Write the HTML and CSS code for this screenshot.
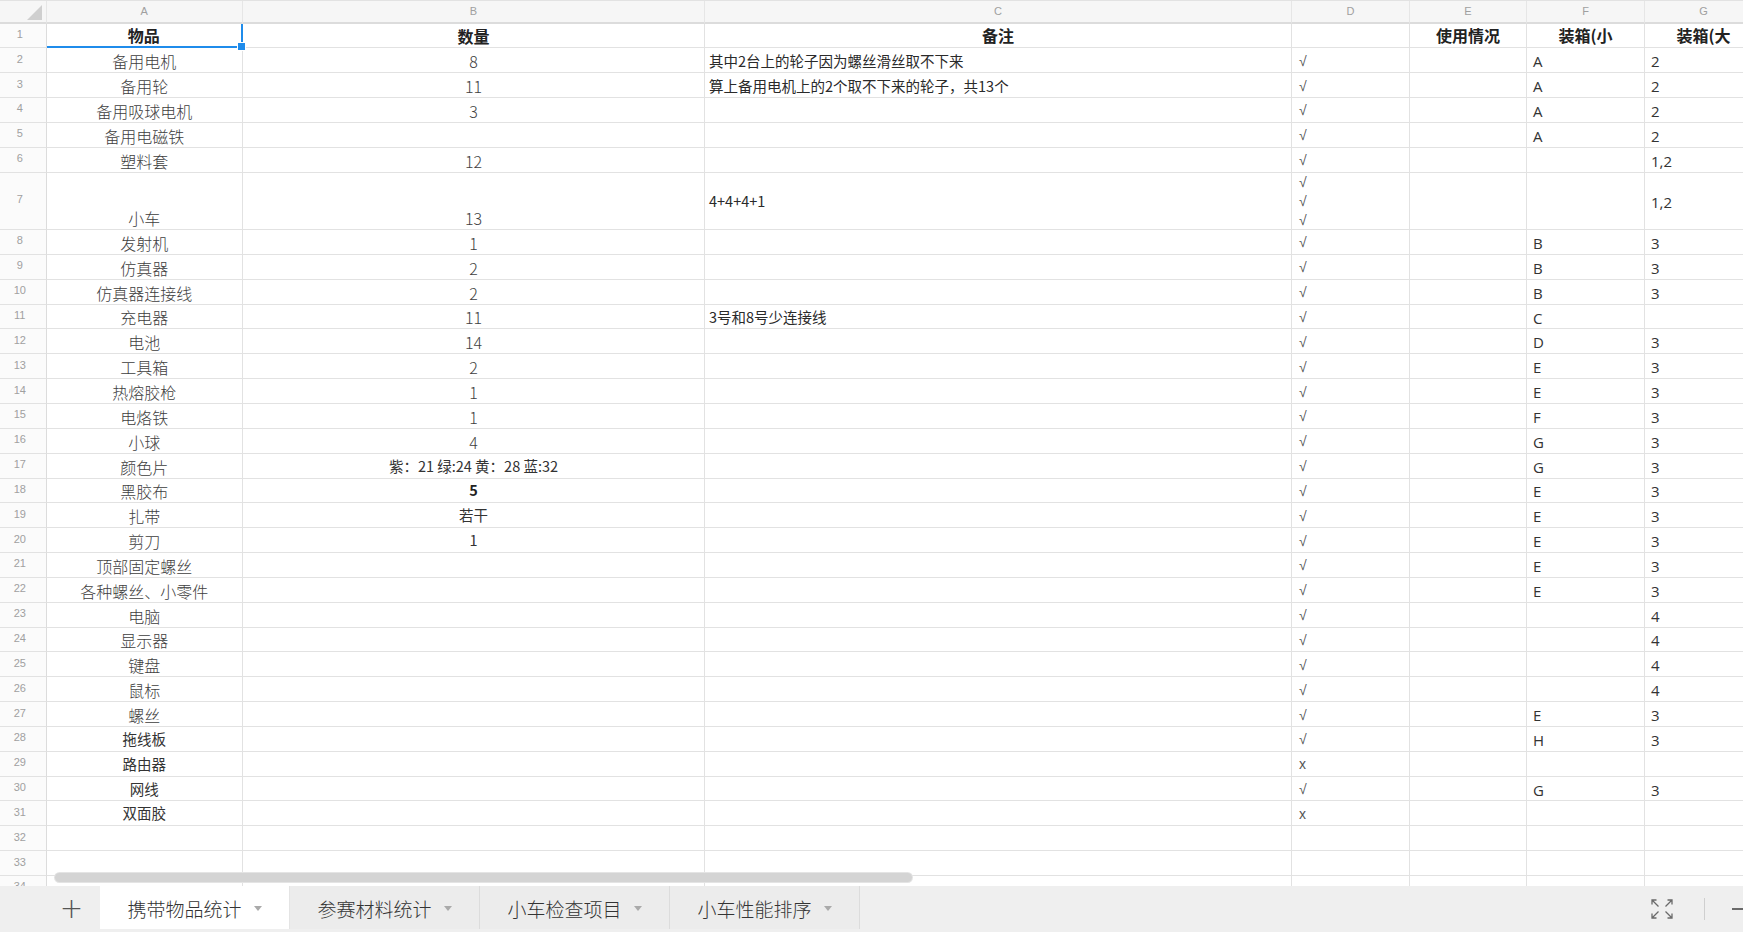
FILE: index.html
```html
<!DOCTYPE html>
<html lang="zh-CN">
<head>
<meta charset="utf-8">
<title>携带物品统计</title>
<link rel="stylesheet" href="styles.css">
</head>
<body>
<div class="app">
  <div class="sheet">
    <div class="row hdr">
      <div class="corner"><svg width="15" height="15" viewBox="0 0 15 15"><polygon points="15,0 15,15 0,15" fill="#cfcfcf"/></svg></div>
      <div>A</div><div>B</div><div>C</div><div>D</div><div>E</div><div>F</div><div>G</div>
    </div>
    <div class="row"><div class="rh">1</div><div class="a hb sel">物品</div><div class="b hb">数量</div><div class="cc hb ctr">备注</div><div class="d"></div><div class="e hb ctr">使用情况</div><div class="f hb ctr">装箱(小</div><div class="g hb ctr">装箱(大</div></div>
    <div class="row"><div class="rh">2</div><div class="a">备用电机</div><div class="b">8</div><div class="cc">其中2台上的轮子因为螺丝滑丝取不下来</div><div class="d">√</div><div class="e"></div><div class="f">A</div><div class="g">2</div></div>
    <div class="row"><div class="rh">3</div><div class="a">备用轮</div><div class="b">11</div><div class="cc">算上备用电机上的2个取不下来的轮子，共13个</div><div class="d">√</div><div class="e"></div><div class="f">A</div><div class="g">2</div></div>
    <div class="row"><div class="rh">4</div><div class="a">备用吸球电机</div><div class="b">3</div><div class="cc"></div><div class="d">√</div><div class="e"></div><div class="f">A</div><div class="g">2</div></div>
    <div class="row"><div class="rh">5</div><div class="a">备用电磁铁</div><div class="b"></div><div class="cc"></div><div class="d">√</div><div class="e"></div><div class="f">A</div><div class="g">2</div></div>
    <div class="row"><div class="rh">6</div><div class="a">塑料套</div><div class="b">12</div><div class="cc"></div><div class="d">√</div><div class="e"></div><div class="f"></div><div class="g">1,2</div></div>
    <div class="row tall"><div class="rh">7</div><div class="a">小车</div><div class="b">13</div><div class="cc">4+4+4+1</div><div class="d stack"><span>√</span><span>√</span><span>√</span></div><div class="e"></div><div class="f"></div><div class="g">1,2</div></div>
    <div class="row"><div class="rh">8</div><div class="a">发射机</div><div class="b">1</div><div class="cc"></div><div class="d">√</div><div class="e"></div><div class="f">B</div><div class="g">3</div></div>
    <div class="row"><div class="rh">9</div><div class="a">仿真器</div><div class="b">2</div><div class="cc"></div><div class="d">√</div><div class="e"></div><div class="f">B</div><div class="g">3</div></div>
    <div class="row"><div class="rh">10</div><div class="a">仿真器连接线</div><div class="b">2</div><div class="cc"></div><div class="d">√</div><div class="e"></div><div class="f">B</div><div class="g">3</div></div>
    <div class="row"><div class="rh">11</div><div class="a">充电器</div><div class="b">11</div><div class="cc">3号和8号少连接线</div><div class="d">√</div><div class="e"></div><div class="f">C</div><div class="g"></div></div>
    <div class="row"><div class="rh">12</div><div class="a">电池</div><div class="b">14</div><div class="cc"></div><div class="d">√</div><div class="e"></div><div class="f">D</div><div class="g">3</div></div>
    <div class="row"><div class="rh">13</div><div class="a">工具箱</div><div class="b">2</div><div class="cc"></div><div class="d">√</div><div class="e"></div><div class="f">E</div><div class="g">3</div></div>
    <div class="row"><div class="rh">14</div><div class="a">热熔胶枪</div><div class="b">1</div><div class="cc"></div><div class="d">√</div><div class="e"></div><div class="f">E</div><div class="g">3</div></div>
    <div class="row"><div class="rh">15</div><div class="a">电烙铁</div><div class="b">1</div><div class="cc"></div><div class="d">√</div><div class="e"></div><div class="f">F</div><div class="g">3</div></div>
    <div class="row"><div class="rh">16</div><div class="a">小球</div><div class="b">4</div><div class="cc"></div><div class="d">√</div><div class="e"></div><div class="f">G</div><div class="g">3</div></div>
    <div class="row"><div class="rh">17</div><div class="a">颜色片</div><div class="b s">紫：21 绿:24 黄：28 蓝:32</div><div class="cc"></div><div class="d">√</div><div class="e"></div><div class="f">G</div><div class="g">3</div></div>
    <div class="row"><div class="rh">18</div><div class="a">黑胶布</div><div class="b s bold">5</div><div class="cc"></div><div class="d">√</div><div class="e"></div><div class="f">E</div><div class="g">3</div></div>
    <div class="row"><div class="rh">19</div><div class="a">扎带</div><div class="b s">若干</div><div class="cc"></div><div class="d">√</div><div class="e"></div><div class="f">E</div><div class="g">3</div></div>
    <div class="row"><div class="rh">20</div><div class="a">剪刀</div><div class="b s">1</div><div class="cc"></div><div class="d">√</div><div class="e"></div><div class="f">E</div><div class="g">3</div></div>
    <div class="row"><div class="rh">21</div><div class="a">顶部固定螺丝</div><div class="b"></div><div class="cc"></div><div class="d">√</div><div class="e"></div><div class="f">E</div><div class="g">3</div></div>
    <div class="row"><div class="rh">22</div><div class="a">各种螺丝、小零件</div><div class="b"></div><div class="cc"></div><div class="d">√</div><div class="e"></div><div class="f">E</div><div class="g">3</div></div>
    <div class="row"><div class="rh">23</div><div class="a">电脑</div><div class="b"></div><div class="cc"></div><div class="d">√</div><div class="e"></div><div class="f"></div><div class="g">4</div></div>
    <div class="row"><div class="rh">24</div><div class="a">显示器</div><div class="b"></div><div class="cc"></div><div class="d">√</div><div class="e"></div><div class="f"></div><div class="g">4</div></div>
    <div class="row"><div class="rh">25</div><div class="a">键盘</div><div class="b"></div><div class="cc"></div><div class="d">√</div><div class="e"></div><div class="f"></div><div class="g">4</div></div>
    <div class="row"><div class="rh">26</div><div class="a">鼠标</div><div class="b"></div><div class="cc"></div><div class="d">√</div><div class="e"></div><div class="f"></div><div class="g">4</div></div>
    <div class="row"><div class="rh">27</div><div class="a">螺丝</div><div class="b"></div><div class="cc"></div><div class="d">√</div><div class="e"></div><div class="f">E</div><div class="g">3</div></div>
    <div class="row"><div class="rh">28</div><div class="a s">拖线板</div><div class="b"></div><div class="cc"></div><div class="d">√</div><div class="e"></div><div class="f">H</div><div class="g">3</div></div>
    <div class="row"><div class="rh">29</div><div class="a s">路由器</div><div class="b"></div><div class="cc"></div><div class="d">x</div><div class="e"></div><div class="f"></div><div class="g"></div></div>
    <div class="row"><div class="rh">30</div><div class="a s">网线</div><div class="b"></div><div class="cc"></div><div class="d">√</div><div class="e"></div><div class="f">G</div><div class="g">3</div></div>
    <div class="row"><div class="rh">31</div><div class="a s">双面胶</div><div class="b"></div><div class="cc"></div><div class="d">x</div><div class="e"></div><div class="f"></div><div class="g"></div></div>
    <div class="row"><div class="rh">32</div><div class="a"></div><div class="b"></div><div class="cc"></div><div class="d"></div><div class="e"></div><div class="f"></div><div class="g"></div></div>
    <div class="row"><div class="rh">33</div><div class="a"></div><div class="b"></div><div class="cc"></div><div class="d"></div><div class="e"></div><div class="f"></div><div class="g"></div></div>
    <div class="row"><div class="rh">34</div><div class="a"></div><div class="b"></div><div class="cc"></div><div class="d"></div><div class="e"></div><div class="f"></div><div class="g"></div></div>
    <div class="hscroll"></div>
  </div>
  <div class="tabbar">
    <div class="add">+</div>
    <div class="tab active"><span>携带物品统计</span><i class="arrow"></i></div>
    <div class="tab"><span>参赛材料统计</span><i class="arrow"></i></div>
    <div class="tab"><span>小车检查项目</span><i class="arrow"></i></div>
    <div class="tab"><span>小车性能排序</span><i class="arrow"></i></div>
    <div class="tools">
      <svg class="full" width="24" height="22" viewBox="0 0 24 22" fill="none" stroke="#6a6a6a" stroke-width="1.3">
        <path d="M8.5 8.5L2 2M2 6.5V2H6.5"/>
        <path d="M15.5 8.5L22 2M17.5 2H22V6.5"/>
        <path d="M8.5 13.5L2 20M2 15.5V20H6.5"/>
        <path d="M15.5 13.5L22 20M22 15.5V20H17.5"/>
      </svg>
      <div class="sep"></div>
      <div class="minus"></div>
    </div>
  </div>
</div>
</body>
</html>
```
FILE: styles.css
```css
* { box-sizing: border-box; }
html, body { margin: 0; padding: 0; }
body {
  width: 1743px;
  height: 932px;
  overflow: hidden;
  background: #fff;
  font-family: "Noto Sans CJK SC", "Noto Sans", sans-serif;
  color: #333;
}
.app { display: flex; flex-direction: column; height: 932px; }
.sheet { position: relative; height: 886px; flex: none; overflow: hidden; }
.row {
  display: grid;
  grid-template-columns: 46.5px 196.5px 462px 587px 118px 117px 118px 118px;
  height: 24.85px;
}
.row.tall { height: 57.5px; }
.row > div {
  border-right: 1px solid #e2e2e2;
  border-bottom: 1px solid #e2e2e2;
  display: flex;
  align-items: center;
  overflow: hidden;
  white-space: nowrap;
  min-width: 0;
}
.hdr { height: 23.5px; background: #f6f6f6; border-top: 1px solid #e2e2e2; }
.hdr > div {
  justify-content: center;
  font-family: "Liberation Sans", sans-serif;
  font-size: 11px;
  color: #a0a0a0;
  border-bottom: 2px solid #dcdcdc;
  border-right-color: #e6e6e6;
}
.hdr > .corner { justify-content: flex-end; align-items: flex-end; padding: 0 4px 2px 0; }
.corner svg { display: block; }
.rh {
  justify-content: center;
  padding: 0 6px 3px 0;
  font-family: "Liberation Sans", sans-serif;
  font-size: 11px;
  color: #a0a0a0;
  background: #fbfbfb;
  border-right-color: #dcdcdc !important;
}
.a, .b {
  justify-content: center;
  align-items: flex-end !important;
  font-size: 16px;
  line-height: 20px;
  font-weight: 300;
  color: #3e3e3e;
  padding-bottom: 1px;
}
.s {
  align-items: center !important;
  font-size: 14.5px;
  font-weight: 400;
  color: #333;
  padding-bottom: 0;
}
.bold { font-weight: 700; color: #222; }
.cc {
  padding-left: 4px;
  font-size: 14.5px;
  color: #2a2a2a;
}
.d {
  padding-left: 7px;
  padding-top: 1px;
  font-family: "Liberation Sans", "DejaVu Sans", sans-serif;
  font-size: 14px;
  color: #555;
}
.d.stack { flex-direction: column; align-items: flex-start !important; justify-content: center; line-height: 19px; }
.f, .g {
  padding-left: 6px;
  padding-top: 2px;
  font-family: "Open Sans", "Liberation Sans", sans-serif;
  font-size: 15px;
  color: #333;
}
.hb {
  font-weight: 700;
  font-size: 16px;
  color: #222;
  font-family: "Noto Sans CJK SC", sans-serif;
  padding-left: 0;
  padding-top: 0;
}
.ctr { justify-content: center; }
.sel {
  position: relative;
  overflow: visible !important;
  border-right: 2px solid #1f8ceb !important;
  border-bottom: 2px solid #1f8ceb !important;
  z-index: 2;
}
.sel::after {
  content: "";
  position: absolute;
  right: -5px;
  bottom: -5px;
  width: 7px;
  height: 7px;
  background: #1f8ceb;
  border: 1px solid #fff;
}
.hscroll {
  position: absolute;
  left: 55px;
  top: 873px;
  width: 857px;
  height: 9px;
  border-radius: 5px;
  background: #d4d4d4;
  box-shadow: 0 0 0 1px #e4e4e4;
}
.tabbar {
  flex: none;
  height: 46px;
  background: #efefef;
  display: flex;
  align-items: flex-start;
  padding-left: 43px;
}
.add {
  width: 57px;
  height: 43px;
  display: flex;
  align-items: center;
  justify-content: center;
  font-family: "DejaVu Sans", sans-serif;
  font-weight: 200;
  font-size: 28px;
  color: #555;
  padding-top: 2px;
}
.tab {
  width: 190px;
  height: 43px;
  display: flex;
  align-items: center;
  justify-content: center;
  gap: 12px;
  padding-top: 1px;
  font-size: 19px;
  font-weight: 300;
  color: #333;
  border-right: 1px solid #dcdcdc;
  background: #ececec;
}
.tab.active { background: #fff; border-right-color: #e4e4e4; }
.arrow {
  display: block;
  width: 0;
  height: 0;
  border-left: 4px solid transparent;
  border-right: 4px solid transparent;
  border-top: 5px solid #aaa;
  margin-top: 1px;
}
.tools {
  margin-left: auto;
  height: 46px;
  display: flex;
  align-items: center;
}
.full { display: block; margin-right: 30px; }
.sep { width: 1px; height: 22px; background: #cfcfcf; margin-right: 27px; }
.minus { width: 11px; height: 2px; background: #6a6a6a; }
```
